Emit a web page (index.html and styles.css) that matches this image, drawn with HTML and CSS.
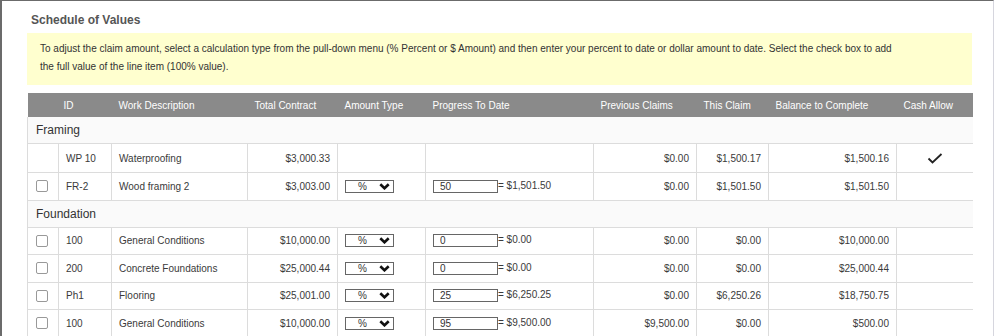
FILE: index.html
```html
<!DOCTYPE html>
<html>
<head>
<meta charset="utf-8">
<link rel="stylesheet" href="styles.css">
</head>
<body>
<div class="frame">
  <h2 class="title">Schedule of Values</h2>
  <div class="notice">To adjust the claim amount, select a calculation type from the pull-down menu (% Percent or $ Amount) and then enter your percent to date or dollar amount to date. Select the check box to add<br>the full value of the line item (100% value).</div>
  <table class="sov">
    <colgroup>
      <col class="c-chk"><col class="c-id"><col class="c-desc"><col class="c-total"><col class="c-type"><col class="c-prog"><col class="c-prev"><col class="c-this"><col class="c-bal"><col class="c-cash">
    </colgroup>
    <thead>
      <tr>
        <th></th><th class="th-id">ID</th><th>Work Description</th><th>Total Contract</th><th>Amount Type</th><th>Progress To Date</th><th>Previous Claims</th><th>This Claim</th><th>Balance to Complete</th><th>Cash Allow</th>
      </tr>
    </thead>
    <tbody>
      <tr class="group"><td colspan="10">Framing</td></tr>
      <tr class="row tall">
        <td></td><td>WP 10</td><td>Waterproofing</td><td class="num">$3,000.33</td><td></td><td></td><td class="num">$0.00</td><td class="num">$1,500.17</td><td class="num">$1,500.16</td>
        <td class="cash"><svg class="check" width="16" height="11" viewBox="0 0 16 11"><polyline points="1.5,5.5 5.5,9.5 14.5,1" fill="none" stroke="#222" stroke-width="1.8"/></svg></td>
      </tr>
      <tr class="row">
        <td><input type="checkbox" class="cb"></td><td>FR-2</td><td>Wood framing 2</td><td class="num">$3,003.00</td>
        <td><span class="sel">%<svg class="chev" width="11" height="7" viewBox="0 0 11 7"><polyline points="1.3,1.3 5.5,5.3 9.7,1.3" fill="none" stroke="#111" stroke-width="2.6"/></svg></span></td>
        <td><input type="text" class="pct" value="50">= $1,501.50</td>
        <td class="num">$0.00</td><td class="num">$1,501.50</td><td class="num">$1,501.50</td><td></td>
      </tr>
      <tr class="group"><td colspan="10">Foundation</td></tr>
      <tr class="row">
        <td><input type="checkbox" class="cb"></td><td>100</td><td>General Conditions</td><td class="num">$10,000.00</td>
        <td><span class="sel">%<svg class="chev" width="11" height="7" viewBox="0 0 11 7"><polyline points="1.3,1.3 5.5,5.3 9.7,1.3" fill="none" stroke="#111" stroke-width="2.6"/></svg></span></td>
        <td><input type="text" class="pct" value="0">= $0.00</td>
        <td class="num">$0.00</td><td class="num">$0.00</td><td class="num">$10,000.00</td><td></td>
      </tr>
      <tr class="row">
        <td><input type="checkbox" class="cb"></td><td>200</td><td>Concrete Foundations</td><td class="num">$25,000.44</td>
        <td><span class="sel">%<svg class="chev" width="11" height="7" viewBox="0 0 11 7"><polyline points="1.3,1.3 5.5,5.3 9.7,1.3" fill="none" stroke="#111" stroke-width="2.6"/></svg></span></td>
        <td><input type="text" class="pct" value="0">= $0.00</td>
        <td class="num">$0.00</td><td class="num">$0.00</td><td class="num">$25,000.44</td><td></td>
      </tr>
      <tr class="row">
        <td><input type="checkbox" class="cb"></td><td>Ph1</td><td>Flooring</td><td class="num">$25,001.00</td>
        <td><span class="sel">%<svg class="chev" width="11" height="7" viewBox="0 0 11 7"><polyline points="1.3,1.3 5.5,5.3 9.7,1.3" fill="none" stroke="#111" stroke-width="2.6"/></svg></span></td>
        <td><input type="text" class="pct" value="25">= $6,250.25</td>
        <td class="num">$0.00</td><td class="num">$6,250.26</td><td class="num">$18,750.75</td><td></td>
      </tr>
      <tr class="row">
        <td><input type="checkbox" class="cb"></td><td>100</td><td>General Conditions</td><td class="num">$10,000.00</td>
        <td><span class="sel">%<svg class="chev" width="11" height="7" viewBox="0 0 11 7"><polyline points="1.3,1.3 5.5,5.3 9.7,1.3" fill="none" stroke="#111" stroke-width="2.6"/></svg></span></td>
        <td><input type="text" class="pct" value="95">= $9,500.00</td>
        <td class="num">$9,500.00</td><td class="num">$0.00</td><td class="num">$500.00</td><td></td>
      </tr>
    </tbody>
  </table>
</div>
</body>
</html>
```

FILE: styles.css
```css
html, body {
  margin: 0;
  padding: 0;
  background: #ffffff;
}
body {
  font-family: "Liberation Sans", Arial, sans-serif;
  color: #333;
  height: 336px;
  overflow: hidden;
}
.frame {
  width: 994px;
  height: 336px;
  overflow: hidden;
  border-top: 1px solid #6b6b6b;
  border-left: 2px solid #6b6b6b;
  border-right: 1px solid #d6d6de;
  padding: 0 0 0 25px;
  box-sizing: border-box;
}
.title {
  margin: 11px 0 0 4px;
  font-size: 12px;
  line-height: 16px;
  font-weight: bold;
  color: #555;
}
.notice {
  margin-top: 5px;
  width: 945px;
  box-sizing: border-box;
  background: #ffffcf;
  padding: 7px 10px 9px 13px;
  font-size: 10px;
  line-height: 18px;
  color: #333;
}
.sov {
  margin-top: 8px;
  width: 945px;
  border-collapse: collapse;
  table-layout: fixed;
  font-size: 10px;
  color: #3a3a3a;
}
.c-chk { width: 31px; }
.c-id { width: 53px; }
.c-desc { width: 136px; }
.c-total { width: 90px; }
.c-type { width: 88px; }
.c-prog { width: 168px; }
.c-prev { width: 103px; }
.c-this { width: 72px; }
.c-bal { width: 128px; }
.c-cash { width: 76px; }
.sov th {
  background: #8a8a8a;
  color: #fff;
  font-weight: normal;
  text-align: left;
  height: 24px;
  padding: 0 0 0 7px;
  white-space: nowrap;
}
.sov th.th-id { padding-left: 5px; }
.sov tr.group td {
  height: 26px;
  padding: 0 0 0 8px;
  font-size: 12px;
  color: #333;
  background: #fafafa;
  border-left: 1px solid #dcdcdc;
  border-bottom: 1px solid #dcdcdc;
}
.sov tr.row td {
  height: 26.5px;
  padding: 0 7px;
  border: 1px solid #dcdcdc;
  border-top: none;
  white-space: nowrap;
  vertical-align: middle;
}
.sov tr.row td:last-child { border-right: none; }
.sov tr.row.tall td { height: 28px; }
.sov td.num { text-align: right; }
.sov td.cash { text-align: center; padding: 0; }
.check { display: block; margin: 0 auto; }
.cb {
  appearance: none;
  -webkit-appearance: none;
  width: 12px;
  height: 12px;
  margin: 0 0 0 1px;
  border: 1px solid #999;
  border-radius: 2px;
  background: #fff;
  display: block;
}
.sel {
  display: inline-flex;
  align-items: center;
  justify-content: space-between;
  box-sizing: border-box;
  width: 49px;
  height: 13px;
  border: 1px solid #666;
  background: #fff;
  padding: 0 3px 0 12px;
  font-size: 10px;
  color: #333;
  vertical-align: middle;
}
.chev { display: block; }
.pct {
  box-sizing: border-box;
  width: 65px;
  height: 13px;
  border: 1px solid #666;
  padding: 0 0 0 6px;
  margin: 0;
  font-family: "Liberation Sans", Arial, sans-serif;
  font-size: 10px;
  color: #333;
  vertical-align: middle;
  outline: none;
}
```
